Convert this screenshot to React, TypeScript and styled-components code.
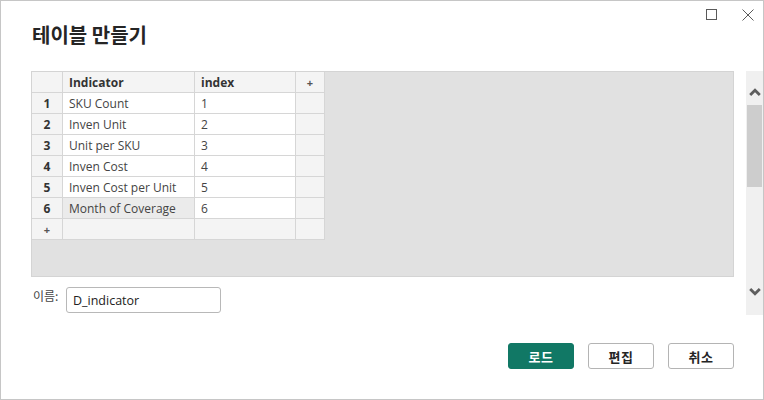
import React from "react";
import styled, { createGlobalStyle } from "styled-components";

const GlobalStyle = createGlobalStyle`
  html, body {
    margin: 0;
    padding: 0;
    background: #ffffff;
  }
  * {
    box-sizing: border-box;
  }
`;

const Window = styled.div`
  width: 764px;
  height: 400px;
  border: 1px solid #c6c6c6;
  background: #ffffff;
  display: flex;
  flex-direction: column;
  font-family: "Open Sans", "Noto Sans CJK KR", sans-serif;
  color: #333333;
  overflow: hidden;
`;

const Header = styled.div`
  height: 70px;
  display: flex;
  justify-content: space-between;
  align-items: flex-start;
`;

const Title = styled.h1`
  margin: 20px 0 0 31px;
  font-family: "Noto Sans CJK KR", sans-serif;
  font-size: 20px;
  line-height: 28px;
  font-weight: 700;
  color: #252525;
`;

const Controls = styled.div`
  display: flex;
  gap: 6px;
  margin-top: 2px;
`;

const CtrlButton = styled.div`
  width: 30px;
  height: 24px;
  display: flex;
  align-items: center;
  justify-content: center;
  color: #555555;
`;

const Body = styled.div`
  display: flex;
  gap: 12px;
  padding-left: 30px;
`;

const LeftColumn = styled.div`
  width: 703px;
  display: flex;
  flex-direction: column;
`;

const GridArea = styled.div`
  height: 206px;
  background: #e1e1e1;
  border: 1px solid #d4d4d4;
  display: flex;
  align-items: flex-start;
`;

const Table = styled.div`
  display: grid;
  grid-template-columns: 30px 131px 100px 28px;
  grid-auto-rows: 20px;
  gap: 1px;
  padding: 0 1px 1px 0;
  background: #d6d6d6;
`;

type CellKind = "head" | "rowhead" | "data" | "extra" | "selected";

const cellBg: Record<CellKind, string> = {
  head: "#f4f4f4",
  rowhead: "#f4f4f4",
  data: "#ffffff",
  extra: "#f4f4f4",
  selected: "#ebebeb",
};

const Cell = styled.div<{ $kind: CellKind; $center?: boolean; $bold?: boolean }>`
  background: ${(p) => cellBg[p.$kind]};
  display: flex;
  align-items: center;
  justify-content: ${(p) => (p.$center ? "center" : "flex-start")};
  padding-left: ${(p) => (p.$center ? "0" : "6px")};
  font-size: 12px;
  font-weight: ${(p) => (p.$bold ? 700 : 400)};
  color: ${(p) => (p.$bold ? "#333333" : "#444444")};
  white-space: nowrap;
  overflow: hidden;
`;

const PlusMark = styled.span`
  font-size: 11px;
  font-weight: 700;
  color: #555555;
  line-height: 1;
`;

const NameRow = styled.div`
  display: flex;
  align-items: center;
  margin-top: 10px;
  height: 26px;
`;

const NameLabel = styled.label`
  font-family: "Noto Sans CJK KR", sans-serif;
  font-size: 12px;
  color: #444444;
  width: 35px;
  padding-left: 2px;
  align-self: flex-start;
`;

const NameInput = styled.div`
  width: 155px;
  height: 26px;
  border: 1px solid #b8b8b8;
  border-radius: 3px;
  padding-left: 6px;
  display: flex;
  align-items: center;
  font-size: 12.5px;
  color: #222222;
`;

const Scrollbar = styled.div`
  width: 17px;
  height: 244px;
  background: #f0f0f0;
  display: flex;
  flex-direction: column;
`;

const ArrowBox = styled.div<{ $pt?: number; $pb?: number }>`
  height: 34px;
  display: flex;
  align-items: center;
  justify-content: center;
  padding-top: ${(p) => p.$pt ?? 0}px;
  padding-bottom: ${(p) => p.$pb ?? 0}px;
`;

const Thumb = styled.div`
  height: 82px;
  margin: 0 1px;
  background: #cdcdcd;
`;

const Track = styled.div`
  flex: 1;
`;

const Footer = styled.div`
  display: flex;
  justify-content: flex-end;
  gap: 14px;
  padding-right: 29px;
  margin-top: 28px;
`;

const Button = styled.button<{ $primary?: boolean }>`
  width: 66px;
  height: 26px;
  border-radius: 3px;
  border: 1px solid ${(p) => (p.$primary ? "#117865" : "#b4b4b4")};
  background: ${(p) => (p.$primary ? "#117865" : "#ffffff")};
  color: ${(p) => (p.$primary ? "#ffffff" : "#252525")};
  font-family: "Noto Sans CJK KR", sans-serif;
  font-size: 13px;
  font-weight: 700;
  letter-spacing: 0.5px;
  padding: 0;
  cursor: pointer;
`;

const rows = [
  ["SKU Count", "1"],
  ["Inven Unit", "2"],
  ["Unit per SKU", "3"],
  ["Inven Cost", "4"],
  ["Inven Cost per Unit", "5"],
  ["Month of Coverage", "6"],
];

const Chevron = ({ up }: { up?: boolean }) => (
  <svg width="12" height="8" viewBox="0 0 12 8">
    <path
      d={up ? "M1.2 7 L6 2.2 L10.8 7" : "M1.2 1 L6 5.8 L10.8 1"}
      fill="none"
      stroke="#5e5e5e"
      strokeWidth="2.8"
    />
  </svg>
);

const App = () => {
  return (
    <>
      <GlobalStyle />
      <Window>
        <Header>
          <Title>테이블 만들기</Title>
          <Controls>
            <CtrlButton>
              <svg width="12" height="12" viewBox="0 0 12 12">
                <rect x="0.5" y="0.5" width="10" height="10" fill="none" stroke="#5a5a5a" strokeWidth="1" />
              </svg>
            </CtrlButton>
            <CtrlButton>
              <svg width="12" height="12" viewBox="0 0 12 12">
                <path d="M0.5 0.5 L11.5 11.5 M11.5 0.5 L0.5 11.5" stroke="#5a5a5a" strokeWidth="1" />
              </svg>
            </CtrlButton>
          </Controls>
        </Header>

        <Body>
          <LeftColumn>
            <GridArea>
              <Table>
                <Cell $kind="head" />
                <Cell $kind="head" $bold>Indicator</Cell>
                <Cell $kind="head" $bold>index</Cell>
                <Cell $kind="extra" $center>
                  <PlusMark>+</PlusMark>
                </Cell>
                {rows.map(([name, idx], i) => (
                  <React.Fragment key={name}>
                    <Cell $kind="rowhead" $center $bold>
                      {i + 1}
                    </Cell>
                    <Cell $kind={i === 5 ? "selected" : "data"}>{name}</Cell>
                    <Cell $kind="data">{idx}</Cell>
                    <Cell $kind="extra" />
                  </React.Fragment>
                ))}
                <Cell $kind="rowhead" $center>
                  <PlusMark>+</PlusMark>
                </Cell>
                <Cell $kind="extra" />
                <Cell $kind="extra" />
                <Cell $kind="extra" />
              </Table>
            </GridArea>
            <NameRow>
              <NameLabel>이름:</NameLabel>
              <NameInput>D_indicator</NameInput>
            </NameRow>
          </LeftColumn>
          <Scrollbar>
            <ArrowBox $pt={8}>
              <Chevron up />
            </ArrowBox>
            <Thumb />
            <Track />
            <ArrowBox $pb={12}>
              <Chevron />
            </ArrowBox>
          </Scrollbar>
        </Body>

        <Footer>
          <Button $primary>로드</Button>
          <Button>편집</Button>
          <Button>취소</Button>
        </Footer>
      </Window>
    </>
  );
};

export default App;
